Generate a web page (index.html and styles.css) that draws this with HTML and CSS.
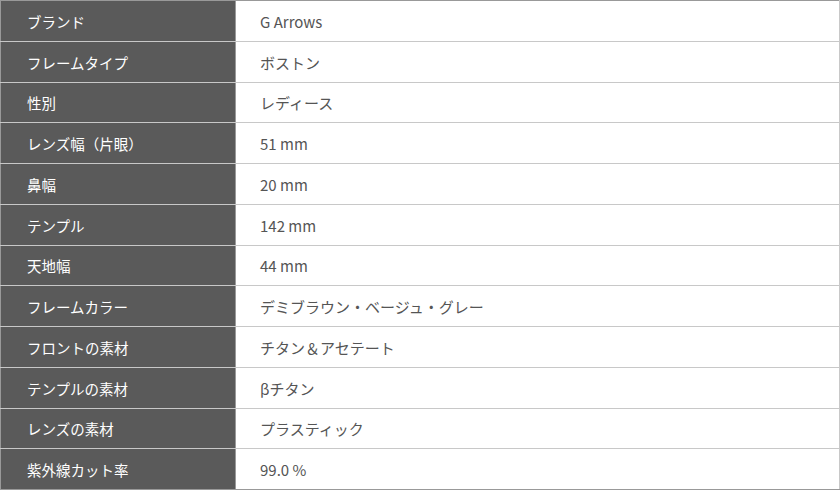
FILE: index.html
```html
<!DOCTYPE html>
<html lang="ja">
<head>
<meta charset="utf-8">
<link rel="stylesheet" href="styles.css">
</head>
<body>
<table class="spec">
  <tbody>
    <tr><th>ブランド</th><td>G Arrows</td></tr>
    <tr><th>フレームタイプ</th><td>ボストン</td></tr>
    <tr><th>性別</th><td>レディース</td></tr>
    <tr><th>レンズ幅（片眼）</th><td>51 mm</td></tr>
    <tr><th>鼻幅</th><td>20 mm</td></tr>
    <tr><th>テンプル</th><td>142 mm</td></tr>
    <tr><th>天地幅</th><td>44 mm</td></tr>
    <tr><th>フレームカラー</th><td>デミブラウン・ベージュ・グレー</td></tr>
    <tr><th>フロントの素材</th><td>チタン＆アセテート</td></tr>
    <tr><th>テンプルの素材</th><td>βチタン</td></tr>
    <tr><th>レンズの素材</th><td>プラスティック</td></tr>
    <tr><th>紫外線カット率</th><td>99.0 %</td></tr>
  </tbody>
</table>
</body>
</html>
```

FILE: styles.css
```css
html, body {
  margin: 0;
  padding: 0;
  background: #fff;
}
body {
  font-family: "Noto Sans CJK JP", "Noto Sans", sans-serif;
  font-size: 14px;
}
.spec {
  width: 840px;
  border-collapse: collapse;
  border: 1px solid #999;
  table-layout: fixed;
}
.spec tr {
  height: 40.75px;
}
.spec th,
.spec td {
  border-top: 1px solid #c8c8c8;
  border-bottom: 1px solid #c8c8c8;
  padding: 2px 0 0 0;
  text-align: left;
  font-weight: 400;
  line-height: 20px;
  vertical-align: middle;
}
.spec th {
  width: 235px;
  background: #5a5a5a;
  color: #fff;
  font-size: 14.5px;
  padding-left: 26px;
  border-right: 1px solid #9a9a9a;
  box-sizing: border-box;
}
.spec td {
  color: #555;
  font-size: 15px;
  padding-left: 24px;
  border-right: 1px solid #c8c8c8;
}
.spec tr:first-child th,
.spec tr:first-child td {
  border-top-color: #999;
}
.spec tr:last-child th,
.spec tr:last-child td {
  border-bottom-color: #999;
}
```
